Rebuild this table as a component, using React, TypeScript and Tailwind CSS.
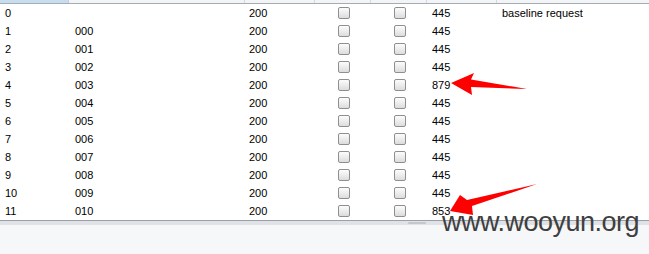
const rows = [
  { n: '0', payload: '', status: '200', len: '445', comment: 'baseline request' },
  { n: '1', payload: '000', status: '200', len: '445', comment: '' },
  { n: '2', payload: '001', status: '200', len: '445', comment: '' },
  { n: '3', payload: '002', status: '200', len: '445', comment: '' },
  { n: '4', payload: '003', status: '200', len: '879', comment: '' },
  { n: '5', payload: '004', status: '200', len: '445', comment: '' },
  { n: '6', payload: '005', status: '200', len: '445', comment: '' },
  { n: '7', payload: '006', status: '200', len: '445', comment: '' },
  { n: '8', payload: '007', status: '200', len: '445', comment: '' },
  { n: '9', payload: '008', status: '200', len: '445', comment: '' },
  { n: '10', payload: '009', status: '200', len: '445', comment: '' },
  { n: '11', payload: '010', status: '200', len: '853', comment: '' },
];

const cols = 'grid grid-cols-[69px_176px_70px_56px_56px_70px_1fr]';

function Check() {
  return (
    <div className="h-[12px] w-[12px] rounded-[2px] border border-[#8e8f8f] bg-gradient-to-b from-[#fdfdfd] to-[#dcdcdc]" />
  );
}

export default function App() {
  return (
    <div className="relative h-[254px] w-[649px] overflow-hidden bg-white font-['Liberation_Sans',Arial,sans-serif] text-[11px] text-black">
      {/* header sliver */}
      <div className={`${cols} h-[4px] border-b border-[#a5acb5]`}>
        <div className="border-r border-[#c5ccd5] bg-[#c8dcef]" />
        <div className="border-r border-[#d5d9de] bg-[#f3f4f5]" />
        <div className="border-r border-[#d5d9de] bg-[#f3f4f5]" />
        <div className="border-r border-[#d5d9de] bg-[#f3f4f5]" />
        <div className="border-r border-[#d5d9de] bg-[#f3f4f5]" />
        <div className="border-r border-[#d5d9de] bg-[#f3f4f5]" />
        <div className="bg-[#f3f4f5]" />
      </div>

      {rows.map((r) => (
        <div key={r.n} className={`${cols} h-[18px] items-center leading-[18px]`}>
          <div className="pl-[5px]">{r.n}</div>
          <div className="pl-[6px]">{r.payload}</div>
          <div className="pl-[4px]">{r.status}</div>
          <div className="flex justify-center pl-[2px]">
            <Check />
          </div>
          <div className="flex justify-center pl-[2px]">
            <Check />
          </div>
          <div className="pl-[5px]">{r.len}</div>
          <div className="pl-[5px]">{r.comment}</div>
        </div>
      ))}

      {/* splitter + lower pane */}
      <div className="h-[1px] bg-[#9aa0a6]" />
      <div className="flex h-[4px] justify-center bg-[#dfe2e6] pl-[184px]">
        <div className="mt-[1px] h-[2px] w-[18px] rounded-sm bg-[#c4c8cd]" />
      </div>
      <div className="h-[40px] bg-[#f6f7f8]" />

      {/* annotation overlay */}
      <svg className="absolute left-0 top-0" width="649" height="254" viewBox="0 0 649 254">
        <polygon points="451,83 474,73 471,79.5 527,89 471,87 472,95" fill="#ff0000" />
        <polygon points="450,211 460,195 467,200 537,184 472,206 473,215" fill="#ff0000" />
      </svg>
      <div className="absolute left-[442px] top-[209px] text-[27px] leading-[27px] tracking-[-0.5px] text-[#3f3f3f]">
        www.wooyun.org
      </div>
    </div>
  );
}
